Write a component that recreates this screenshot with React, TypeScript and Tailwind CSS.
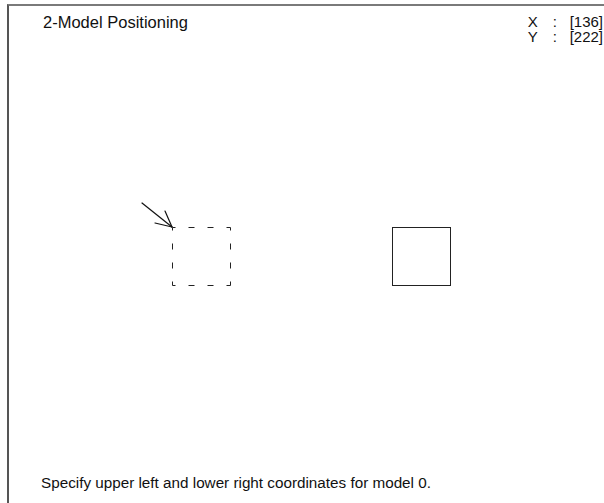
import React from "react";

const coords = [
  { axis: "X", value: 136 },
  { axis: "Y", value: 222 },
];

// dashed edge that starts with a short dash at the corner, like the old terminal drawing
function DashedEdge({ x1, y1, x2, y2 }: { x1: number; y1: number; x2: number; y2: number }) {
  return (
    <line
      x1={x1}
      y1={y1}
      x2={x2}
      y2={y2}
      stroke="#222"
      strokeWidth={1}
      strokeDasharray="6 13"
      strokeDashoffset={3}
    />
  );
}

export default function App() {
  return (
    <div
      className="relative h-[503px] w-[604px] overflow-hidden bg-white pl-[7px] pt-[4px] text-[#111]"
      style={{ fontFamily: '"Liberation Sans", Arial, sans-serif' }}
    >
      <div className="flex h-full flex-col border-l-2 border-t-2 border-l-[#555] border-t-[#7a7a7a]">
        {/* header */}
        <div className="flex items-start justify-between pl-[34px] pr-[1px]">
          <span className="pt-[8px] text-[16.5px] leading-[16px]">2-Model Positioning</span>
          <div className="flex flex-col pt-[8px] text-[15px] leading-[15px]">
            {coords.map((c) => (
              <div key={c.axis} className="flex">
                <span className="w-[25px]">{c.axis}</span>
                <span className="w-[17px]">:</span>
                <span>[{c.value}]</span>
              </div>
            ))}
          </div>
        </div>

        {/* canvas */}
        <div className="flex-1" />

        {/* status line */}
        <div className="pb-[12px] pl-[32px] text-[15.25px] leading-[16px]">
          Specify upper left and lower right coordinates for model 0.
        </div>
      </div>

      <svg
        className="pointer-events-none absolute left-0 top-0"
        width={604}
        height={503}
        viewBox="0 0 604 503"
      >
        {/* arrow pointing at model 0 */}
        <g stroke="#111" strokeWidth={1.2} fill="none" strokeLinecap="round">
          <line x1={142} y1={203} x2={172} y2={227} />
          <line x1={172} y1={227} x2={165} y2={211} />
          <line x1={172} y1={227} x2={155} y2={223} />
        </g>

        {/* model 0, dashed */}
        <DashedEdge x1={172.5} y1={227.5} x2={230.5} y2={227.5} />
        <DashedEdge x1={172.5} y1={285.5} x2={230.5} y2={285.5} />
        <DashedEdge x1={172.5} y1={227.5} x2={172.5} y2={285.5} />
        <DashedEdge x1={230.5} y1={227.5} x2={230.5} y2={285.5} />

        {/* model 1 */}
        <rect x={392.5} y={227.5} width={58} height={58} fill="none" stroke="#222" strokeWidth={1} />
      </svg>
    </div>
  );
}
